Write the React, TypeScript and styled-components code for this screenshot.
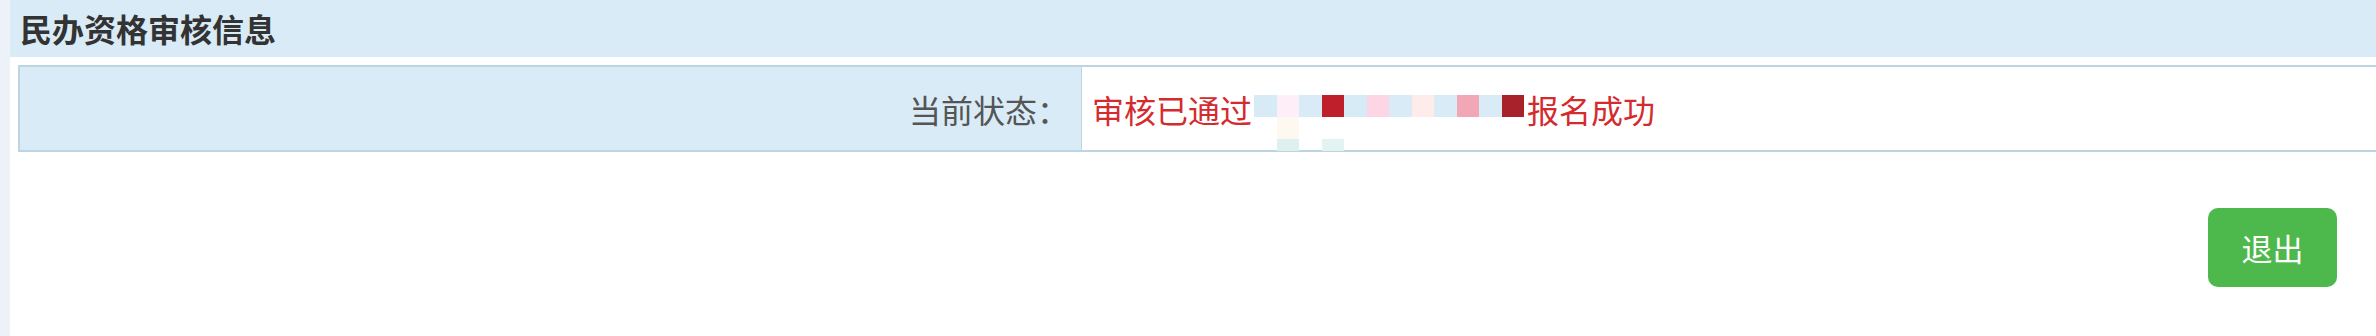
import React from "react";
import styled, { createGlobalStyle } from "styled-components";

const GlobalStyle = createGlobalStyle`
  html, body {
    margin: 0;
    padding: 0;
    background: #ffffff;
    overflow: hidden;
  }
  body {
    font-family: "Noto Sans CJK SC", "Noto Sans", "Liberation Sans", sans-serif;
  }
`;

const Page = styled.div`
  display: flex;
  height: 336px;
`;

const SideStrip = styled.div`
  width: 10px;
  flex: none;
  background: #edf2f9;
`;

const Main = styled.div`
  flex: 1;
  min-width: 0;
  overflow: hidden;
`;

const PanelHeader = styled.div`
  height: 57px;
  line-height: 57px;
  padding-left: 10px;
  background: #d9ebf6;
  color: #333333;
  font-size: 32px;
  font-weight: bold;
`;

const InfoTable = styled.div`
  margin: 8px -20px 0 8px;
  border: 2px solid #bdd4e1;
  display: flex;
  height: 83px;
`;

const LabelCell = styled.div`
  width: 1062px;
  flex: none;
  background: #d9ebf6;
  color: #555555;
  font-size: 32px;
  display: flex;
  align-items: center;
  justify-content: flex-end;
  padding-right: 12px;
  box-sizing: border-box;
  border-right: 1px solid #bdd4e1;
`;

const ValueCell = styled.div`
  flex: 1;
  display: flex;
  align-items: center;
  padding-left: 10px;
  color: #d42b2f;
  font-size: 32px;
  white-space: nowrap;
`;

const Mosaic = styled.div`
  display: grid;
  grid-template-columns: repeat(12, 22.5px);
  grid-template-rows: 22px 22px 12px;
  align-self: flex-start;
  margin-top: 28px;
  margin-left: 2px;
  margin-right: 3px;
`;

const Tile = styled.span<{ $c: string }>`
  background: ${(p) => p.$c};
`;

const Actions = styled.div`
  display: flex;
  justify-content: flex-end;
  padding-right: 39px;
  margin-top: 56px;
`;

const ExitButton = styled.button`
  width: 129px;
  height: 79px;
  border: none;
  border-radius: 10px;
  background: #4db84b;
  color: #ffffff;
  font-family: inherit;
  font-size: 31px;
  cursor: pointer;
`;

const T = "transparent";
const mosaic = [
  "#d6ebf6", "#fdeef8", "#d8ebf6", "#bf1f2a", "#d6ebf6", "#fcd6e4",
  "#d8ebf6", "#fdecea", "#d8ebf6", "#f2a7b7", "#d8ebf6", "#a8222b",
  T, "#fdf8f0", T, T, T, T, T, T, T, T, T, T,
  T, "#dff0f0", T, "#e3f2f2", T, T, T, T, T, T, T, T,
];

export default function App() {
  return (
    <>
      <GlobalStyle />
      <Page>
        <SideStrip />
        <Main>
          <PanelHeader>民办资格审核信息</PanelHeader>
          <InfoTable>
            <LabelCell>当前状态：</LabelCell>
            <ValueCell>
              <span>审核已通过</span>
              <Mosaic>
                {mosaic.map((c, i) => (
                  <Tile key={i} $c={c} />
                ))}
              </Mosaic>
              <span>报名成功</span>
            </ValueCell>
          </InfoTable>
          <Actions>
            <ExitButton>退出</ExitButton>
          </Actions>
        </Main>
      </Page>
    </>
  );
}
